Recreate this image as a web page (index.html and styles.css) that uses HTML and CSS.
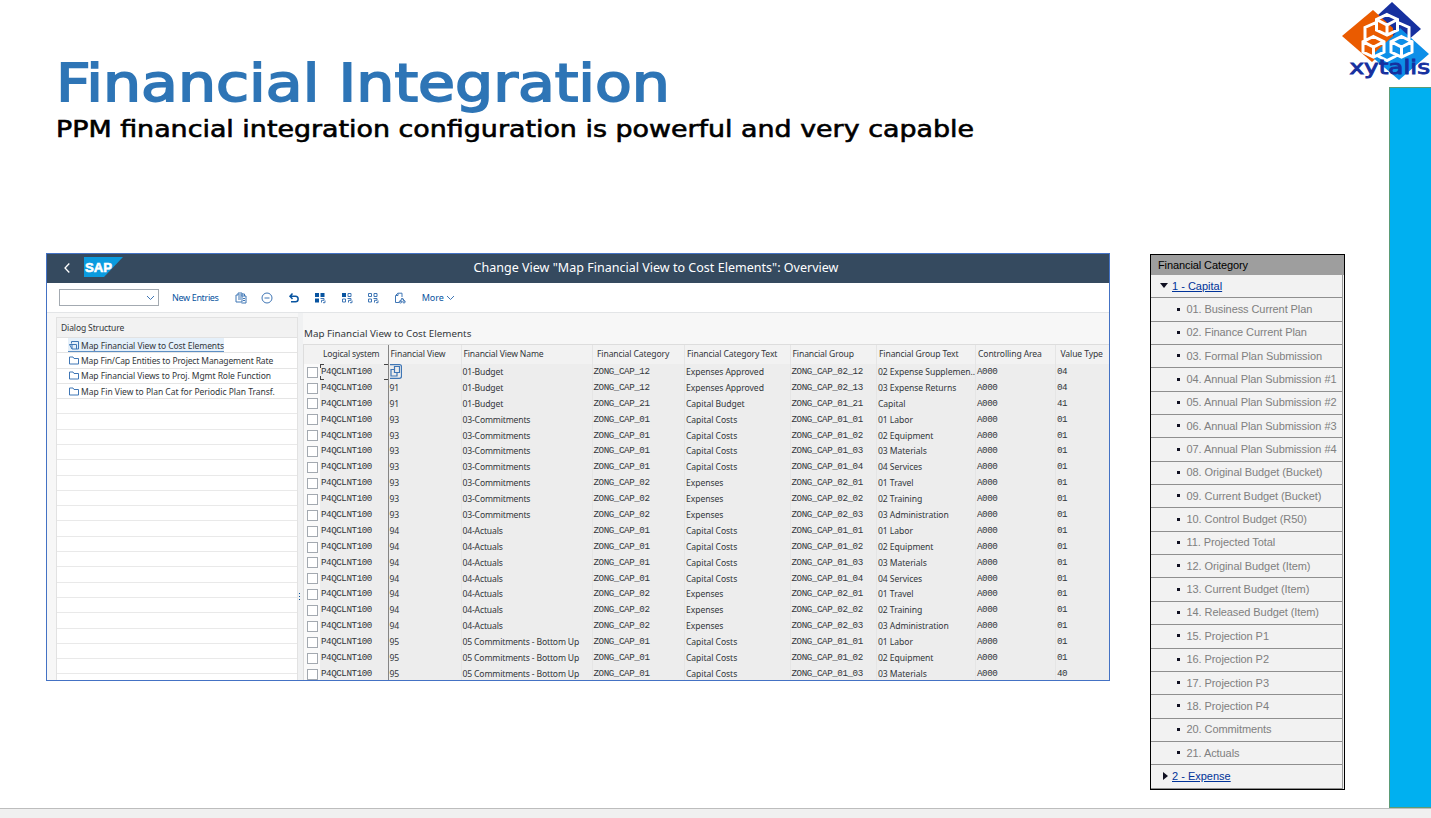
FILE: index.html
```html
<!DOCTYPE html>
<html lang="en">
<head>
<meta charset="utf-8">
<title>Financial Integration</title>
<link rel="stylesheet" href="styles.css">
</head>
<body>
<div class="slide">
  <main class="main">
    <header class="titles">
      <svg class="titles-art" width="1000" height="105" viewBox="0 0 1000 105">
        <text class="title" x="12" y="56" textLength="614" lengthAdjust="spacingAndGlyphs">Financial Integration</text>
        <text class="subtitle" x="12" y="92" textLength="918" lengthAdjust="spacingAndGlyphs">PPM financial integration configuration is powerful and very capable</text>
      </svg>
    </header>
    <div class="panels">
      <section class="window">
        <div class="shell">
          <svg class="back" width="8" height="12" viewBox="0 0 8 12"><path d="M6.300 1.500 2 6l4.300 4.500"/></svg>
          <svg class="sap" width="39" height="20" viewBox="0 0 39 20"><path d="M0 0h39L20 20H0z" fill="#0a9bdf"/><text x="1" y="14.500" textLength="27" lengthAdjust="spacingAndGlyphs">SAP</text></svg>
          <h2>Change View "Map Financial View to Cost Elements": Overview</h2>
        </div>
        <div class="toolbar">
          <div class="combo"><svg width="9" height="6" viewBox="0 0 9 6"><path d="m1 1 3.500 3.500L8 1"/></svg></div>
          <span class="tool-text new">New Entries</span>
          <svg class="ico" width="12" height="12" viewBox="0 0 12 12"><path d="M3 3V1h4v2M7 2h2.500v2M1 3h6v7H1zM3 5h3M3 7h3M6.500 4H11v7H6.500M8 6.500h2M8 8.500h2"/></svg>
          <svg class="ico" width="12" height="12" viewBox="0 0 12 12"><circle cx="6" cy="6" r="5"/><path d="M3.500 6h5"/></svg>
          <svg class="ico bold" width="12" height="12" viewBox="0 0 12 12"><path d="M4.500 1.500 2 4.300l2.500 2.700M2 4.300h5.500c3.500 0 3.500 5.500 0 5.500H3"/></svg>
          <svg class="ico" width="12" height="12" viewBox="0 0 12 12"><path class="solid" d="M1 1h4v4H1zM6.500 1h4v4h-4zM1 6.500h4v4H1z"/><path d="M6.500 6.500H10v1.800H7.500v2.200M9 10.700h2V8.500"/></svg>
          <svg class="ico" width="12" height="12" viewBox="0 0 12 12"><path class="solid" d="M1 1h4v4H1z"/><path d="M7 1.500h3v3H7zM1.500 7h3v3h-3zM6.500 6.500H10v1.800H7.500v2.200M9 10.700h2V8.500"/></svg>
          <svg class="ico" width="12" height="12" viewBox="0 0 12 12"><path d="M1.500 1.500h3v3h-3zM7 1.500h3v3H7zM1.500 7h3v3h-3zM6.500 6.500H10v1.800H7.500v2.200M9 10.700h2V8.500"/></svg>
          <svg class="ico" width="12" height="12" viewBox="0 0 12 12"><path d="M5 10.500H1.500v-7l2.300-2.300H8V5M4 1.500v2H2M6 10l2-4 1.300 2M9 6.500l1.500 3"/><circle cx="6.500" cy="9.800" r="1.200"/><circle cx="10" cy="9.800" r="1.200"/></svg>
          <span class="tool-text more">More</span>
          <svg class="ico chev" width="9" height="6" viewBox="0 0 9 6"><path d="m1 1 3.500 3.500L8 1"/></svg>
        </div>
        <div class="work">
          <aside class="dialog">
            <div class="dialog-head">Dialog Structure</div>
            <div class="node n1"><span class="pick"><svg width="10" height="9" viewBox="0 0 10 9"><path d="M2.500 2.500V.5H9.500V8H3V3.500H.5M.5 3.500 3 8M3 3.500h4.500V8"/></svg>Map Financial View to Cost Elements</span></div>
            <div class="node n2"><svg width="10" height="9" viewBox="0 0 10 9"><path d="M.5 8V1h3.500l1 1.500h4.500V8z"/></svg>Map Fin/Cap Entities to Project Management Rate</div>
            <div class="node n3"><svg width="10" height="9" viewBox="0 0 10 9"><path d="M.5 8V1h3.500l1 1.500h4.500V8z"/></svg>Map Financial Views to Proj. Mgmt Role Function</div>
            <div class="node n4"><svg width="10" height="9" viewBox="0 0 10 9"><path d="M.5 8V1h3.500l1 1.500h4.500V8z"/></svg>Map Fin View to Plan Cat for Periodic Plan Transf.</div>
            <div class="blank"></div>
          </aside>
          <div class="splitter"><i></i></div>
          <div class="grid">
            <h3>Map Financial View to Cost Elements</h3>
            <div class="row head"><b></b><span>Logical system</span><span>Financial View</span><span>Financial View Name</span><span>Financial Category</span><span>Financial Category Text</span><span>Financial Group</span><span>Financial Group Text</span><span>Controlling Area</span><span>Value Type</span></div>
            <div class="row first"><b></b><span>P4QCLNT100</span><span><svg class="help" width="12" height="15" viewBox="0 0 12 15"><path d="M0 .7h9.500q2 0 2 2v9.600q0 2-2 2H0M4.500 2.500h5v6h-5zM4 5.500H1v6.500h6V9"/></svg></span><span>01-Budget</span><span>ZONG_CAP_12</span><span>Expenses Approved</span><span>ZONG_CAP_02_12</span><span>02 Expense Supplemen..</span><span>A000</span><span>04</span></div>
            <div class="row"><b></b><span>P4QCLNT100</span><span>91</span><span>01-Budget</span><span>ZONG_CAP_12</span><span>Expenses Approved</span><span>ZONG_CAP_02_13</span><span>03 Expense Returns</span><span>A000</span><span>04</span></div>
            <div class="row"><b></b><span>P4QCLNT100</span><span>91</span><span>01-Budget</span><span>ZONG_CAP_21</span><span>Capital Budget</span><span>ZONG_CAP_01_21</span><span>Capital</span><span>A000</span><span>41</span></div>
            <div class="row"><b></b><span>P4QCLNT100</span><span>93</span><span>03-Commitments</span><span>ZONG_CAP_01</span><span>Capital Costs</span><span>ZONG_CAP_01_01</span><span>01 Labor</span><span>A000</span><span>01</span></div>
            <div class="row"><b></b><span>P4QCLNT100</span><span>93</span><span>03-Commitments</span><span>ZONG_CAP_01</span><span>Capital Costs</span><span>ZONG_CAP_01_02</span><span>02 Equipment</span><span>A000</span><span>01</span></div>
            <div class="row"><b></b><span>P4QCLNT100</span><span>93</span><span>03-Commitments</span><span>ZONG_CAP_01</span><span>Capital Costs</span><span>ZONG_CAP_01_03</span><span>03 Materials</span><span>A000</span><span>01</span></div>
            <div class="row"><b></b><span>P4QCLNT100</span><span>93</span><span>03-Commitments</span><span>ZONG_CAP_01</span><span>Capital Costs</span><span>ZONG_CAP_01_04</span><span>04 Services</span><span>A000</span><span>01</span></div>
            <div class="row"><b></b><span>P4QCLNT100</span><span>93</span><span>03-Commitments</span><span>ZONG_CAP_02</span><span>Expenses</span><span>ZONG_CAP_02_01</span><span>01 Travel</span><span>A000</span><span>01</span></div>
            <div class="row"><b></b><span>P4QCLNT100</span><span>93</span><span>03-Commitments</span><span>ZONG_CAP_02</span><span>Expenses</span><span>ZONG_CAP_02_02</span><span>02 Training</span><span>A000</span><span>01</span></div>
            <div class="row"><b></b><span>P4QCLNT100</span><span>93</span><span>03-Commitments</span><span>ZONG_CAP_02</span><span>Expenses</span><span>ZONG_CAP_02_03</span><span>03 Administration</span><span>A000</span><span>01</span></div>
            <div class="row"><b></b><span>P4QCLNT100</span><span>94</span><span>04-Actuals</span><span>ZONG_CAP_01</span><span>Capital Costs</span><span>ZONG_CAP_01_01</span><span>01 Labor</span><span>A000</span><span>01</span></div>
            <div class="row"><b></b><span>P4QCLNT100</span><span>94</span><span>04-Actuals</span><span>ZONG_CAP_01</span><span>Capital Costs</span><span>ZONG_CAP_01_02</span><span>02 Equipment</span><span>A000</span><span>01</span></div>
            <div class="row"><b></b><span>P4QCLNT100</span><span>94</span><span>04-Actuals</span><span>ZONG_CAP_01</span><span>Capital Costs</span><span>ZONG_CAP_01_03</span><span>03 Materials</span><span>A000</span><span>01</span></div>
            <div class="row"><b></b><span>P4QCLNT100</span><span>94</span><span>04-Actuals</span><span>ZONG_CAP_01</span><span>Capital Costs</span><span>ZONG_CAP_01_04</span><span>04 Services</span><span>A000</span><span>01</span></div>
            <div class="row"><b></b><span>P4QCLNT100</span><span>94</span><span>04-Actuals</span><span>ZONG_CAP_02</span><span>Expenses</span><span>ZONG_CAP_02_01</span><span>01 Travel</span><span>A000</span><span>01</span></div>
            <div class="row"><b></b><span>P4QCLNT100</span><span>94</span><span>04-Actuals</span><span>ZONG_CAP_02</span><span>Expenses</span><span>ZONG_CAP_02_02</span><span>02 Training</span><span>A000</span><span>01</span></div>
            <div class="row"><b></b><span>P4QCLNT100</span><span>94</span><span>04-Actuals</span><span>ZONG_CAP_02</span><span>Expenses</span><span>ZONG_CAP_02_03</span><span>03 Administration</span><span>A000</span><span>01</span></div>
            <div class="row"><b></b><span>P4QCLNT100</span><span>95</span><span>05 Commitments - Bottom Up</span><span>ZONG_CAP_01</span><span>Capital Costs</span><span>ZONG_CAP_01_01</span><span>01 Labor</span><span>A000</span><span>01</span></div>
            <div class="row"><b></b><span>P4QCLNT100</span><span>95</span><span>05 Commitments - Bottom Up</span><span>ZONG_CAP_01</span><span>Capital Costs</span><span>ZONG_CAP_01_02</span><span>02 Equipment</span><span>A000</span><span>01</span></div>
            <div class="row"><b></b><span>P4QCLNT100</span><span>95</span><span>05 Commitments - Bottom Up</span><span>ZONG_CAP_01</span><span>Capital Costs</span><span>ZONG_CAP_01_03</span><span>03 Materials</span><span>A000</span><span>40</span></div>
          </div>
        </div>
      </section>
      <section class="category">
        <div class="cat-head">Financial Category</div>
        <ul>
          <li class="top open"><a>1 - Capital</a></li>
          <li>01. Business Current Plan</li>
          <li>02. Finance Current Plan</li>
          <li>03. Formal Plan Submission</li>
          <li>04. Annual Plan Submission #1</li>
          <li>05. Annual Plan Submission #2</li>
          <li>06. Annual Plan Submission #3</li>
          <li>07. Annual Plan Submission #4</li>
          <li>08. Original Budget (Bucket)</li>
          <li>09. Current Budget (Bucket)</li>
          <li>10. Control Budget (R50)</li>
          <li>11. Projected Total</li>
          <li>12. Original Budget (Item)</li>
          <li>13. Current Budget (Item)</li>
          <li>14. Released Budget (Item)</li>
          <li>15. Projection P1</li>
          <li>16. Projection P2</li>
          <li>17. Projection P3</li>
          <li>18. Projection P4</li>
          <li>20. Commitments</li>
          <li>21. Actuals</li>
          <li class="top closed"><a>2 - Expense</a></li>
        </ul>
      </section>
    </div>
  </main>
  <div class="bar"></div>
  <svg class="logo" width="100" height="86" viewBox="0 0 100 86">
    <path d="M61 2 90 29 62 53 34 27z" fill="#16309f"/>
    <path d="M42 10 62 28V42L41 62 11 36z" fill="#ea5b00"/>
    <path d="M69 28 98 54 68 80 40 56 62 36z" fill="#0d8fe8"/>
    <path class="cubes" d="m56 14.500 10.500 5v10.500L56 35l-10.500-5V19.500zM45.500 19.500 56 25l10.500-5.500M56 25v10M42.500 36.500l10.500 5.200V52l-10.500 5L32 52V41.700zM32 41.700l10.500 5.300L53 41.700M42.500 47v10M70.500 36.500 81 41.700V52l-10.500 5L60 52V41.700zM60 41.700 70.500 47 81 41.700M70.500 47v10M45 22.500l-11 5V40M67 22.500l11 5V40M47 56l9 4.500 9-4.500"/>
    <text x="18.500" y="73.500" textLength="80.500" lengthAdjust="spacingAndGlyphs">xytalis</text>
  </svg>
</div>
<footer class="strip"></footer>
</body>
</html>
```
FILE: styles.css
```css
* { box-sizing: border-box; }
body { margin: 0; width: 1431px; height: 818px; overflow: hidden; background: #fff; font-family: "Noto Sans", sans-serif; }
h2, h3, ul { margin: 0; padding: 0; font-weight: normal; }
.slide { position: relative; display: flex; height: 808px; }
.main { width: 1389px; padding: 45px 0 0 44px; }
.titles { height: 208px; }
.titles-art { display: block; font-family: "DejaVu Sans", sans-serif; }
.title { font-size: 51px; fill: #2e75b6; stroke: #2e75b6; stroke-width: 1.8px; }
.subtitle { font-size: 22.5px; fill: #000; stroke: #000; stroke-width: .6px; }
.bar { width: 42px; margin-top: 87px; background: #00b0f0; border: 1px solid #5b9c77; border-right: 0; }
.logo { position: absolute; left: 1331px; top: 0; }
.logo .cubes { fill: none; stroke: #fff; stroke-width: 3; }
.logo text { font: 19px "DejaVu Sans", sans-serif; fill: #16309f; stroke: #16309f; stroke-width: .9; }
.strip { height: 10px; background: #f0f0f0; border-top: 1px solid #bdbdbd; }
.panels { display: flex; align-items: flex-start; padding-left: 2px; }

.window { width: 1064px; height: 428px; overflow: hidden; border: 1px solid #4472c4; background: #f7f7f7; color: #32363a; }
.shell { display: flex; height: 29px; background: #354a5f; color: #fff; }
.back { margin: 8px 0 0 16px; fill: none; stroke: #fff; stroke-width: 1.3; }
.sap { margin: 3px 0 0 13px; }
.sap text { font: bold 13.5px "Liberation Sans", sans-serif; fill: #fff; stroke: #fff; stroke-width: .6; }
.shell h2 { margin-left: 350.5px; font-size: 12.5px; line-height: 27px; letter-spacing: .02px; white-space: nowrap; }
.toolbar { display: flex; align-items: center; height: 30px; padding-left: 12px; background: #fff; border-bottom: 1px solid #e3e5e7; }
.combo { display: flex; justify-content: flex-end; align-items: center; width: 100px; height: 17px; padding-right: 3px; border: 1px solid #a3aab1; }
.combo path, .ico path, .ico circle { fill: none; stroke: #3f76b5; stroke-width: 1; }
.tool-text { color: #0854a0; font-size: 9px; letter-spacing: -.05px; white-space: nowrap; }
.new { width: 62.5px; margin-left: 13px; letter-spacing: -.35px; }
.ico { flex: none; margin-right: 14.6px; }
.ico.bold path { stroke: #0854a0; stroke-width: 1.5; }
.ico path.solid { fill: #0854a0; stroke: none; }
.more { width: 24px; margin-left: 1px; }

.work { display: flex; padding-left: 9px; }
.dialog { flex: none; width: 242px; height: 368px; margin-top: 4px; background: #fff; border: 1px solid #e2e2e2; font-size: 8.5px; }
.dialog-head { height: 20px; padding-left: 4px; line-height: 20px; letter-spacing: -.12px; background: #f2f2f2; border-bottom: 1px solid #e2e2e2; }
.node { display: flex; align-items: center; height: 15.3px; padding-left: 11px; border-bottom: 1px solid #e5e5e5; white-space: nowrap; }
.node svg { flex: none; margin: 0 2px 0 1px; fill: none; stroke: #3f76b5; stroke-width: 1; }
.n1 { letter-spacing: -.06px; }
.n2 { letter-spacing: -.13px; }
.n3 { letter-spacing: -.07px; }
.n4 { letter-spacing: -.02px; }
.pick { display: flex; align-items: center; height: 14.5px; padding-top: 1px; background: #e5f0fa; border-bottom: 1px solid #5d8fc4; }
.blank { height: 290px; background: repeating-linear-gradient(#fff 0 14.3px, #e9e9e9 14.3px 15.3px); }
.splitter { display: flex; flex: none; align-items: center; width: 5px; height: 367px; background: #f0f1f2; }
.splitter i { width: 1px; height: 9px; margin: 201px 0 0 1px; background: repeating-linear-gradient(#0854a0 0 1px, transparent 1px 3px); }
.grid { flex: none; width: 807px; }
.grid h3 { height: 31px; padding: 11px 0 0 1px; font-size: 9.8px; line-height: 19px; white-space: nowrap; }
.row { display: grid; grid-template-columns: 17px 68.5px 73px 131px 92.5px 105.5px 86.5px 99px 80px 54px; height: 15.9px; font-size: 8.6px; line-height: 16.4px; letter-spacing: -.07px; }
.row b { display: flex; align-items: center; justify-content: center; background: #fafafa; border-bottom: 1px solid #e3e3e3; border-left: 1px solid #ddd; }
.row b::before { content: ""; flex: none; width: 9px; height: 9px; background: #fff; border: 1px solid #a3a9b0; }
.row span { padding-left: 1px; background: #ededed; border-right: 1px solid #e5e5e5; border-bottom: 1px solid #e3e3e3; white-space: nowrap; }
.row span:nth-child(2) { border-right: 1px solid #858585; }
.row span:nth-child(4) { letter-spacing: -.16px; }
.row:not(.head) span:is(:nth-child(2), :nth-child(5), :nth-child(7), :nth-child(9), :nth-child(10)) { font-family: "Liberation Mono", monospace; font-size: 9.2px; letter-spacing: -.42px; }
.row.head { height: 20px; line-height: 19px; border-top: 1px solid #ddd; letter-spacing: -.12px; }
.head span, .head b { background: #f2f2f2; }
.head b::before { display: none; }
.row.head span { padding-left: 2px; }
.row.head span:nth-child(2) { padding-left: 3px; letter-spacing: -.2px; }
.row.head span:is(:nth-child(5), :nth-child(10)) { padding-left: 4.5px; }
.help { display: block; fill: none; stroke: #3f76b5; stroke-width: 1.2; }
.row.first span:nth-child(2) { background: linear-gradient(#444, #444) 0 0 / 4px 1px, linear-gradient(#444, #444) 0 0 / 1px 4px, linear-gradient(#444, #444) 0 100% / 4px 1px, linear-gradient(#444, #444) 0 100% / 1px 4px, linear-gradient(#444, #444) 100% 0 / 4px 1px, linear-gradient(#444, #444) 100% 100% / 4px 1px, #ededed; background-repeat: no-repeat; }

.category { width: 195px; height: 536px; margin: 1px 0 0 40px; border: 1.5px solid #000; outline: 1px solid #000; outline-offset: -1px; background: #f2f2f2; font-family: "Liberation Sans", sans-serif; font-size: 11px; overflow: hidden; }
.cat-head { height: 20px; padding-left: 7px; line-height: 21px; letter-spacing: -.1px; color: #000; background: #9e9e9e; }
.category ul { list-style: none; border-right: 1px solid #999; margin-right: 1px; }
.category li { display: flex; align-items: center; height: 23.35px; padding-left: 26px; border-bottom: 1px solid #8f8f8f; color: #808080; letter-spacing: -.08px; line-height: 12px; padding-bottom: 1px; white-space: nowrap; }
.category li::before { content: ""; flex: none; width: 3px; height: 3px; margin-right: 6.5px; background: #112; }
.category li.top { padding-left: 9px; letter-spacing: 0; }
.category li.top a { color: #003399; text-decoration: underline; }
.category li.open::before { width: 0; height: 0; margin-right: 4px; background: none; border: 4px solid transparent; border-top: 5px solid #112; border-bottom: 0; }
.category li.closed::before { width: 0; height: 0; margin: 0 4px 0 3px; background: none; border: 4px solid transparent; border-left: 5px solid #112; border-right: 0; }
```
